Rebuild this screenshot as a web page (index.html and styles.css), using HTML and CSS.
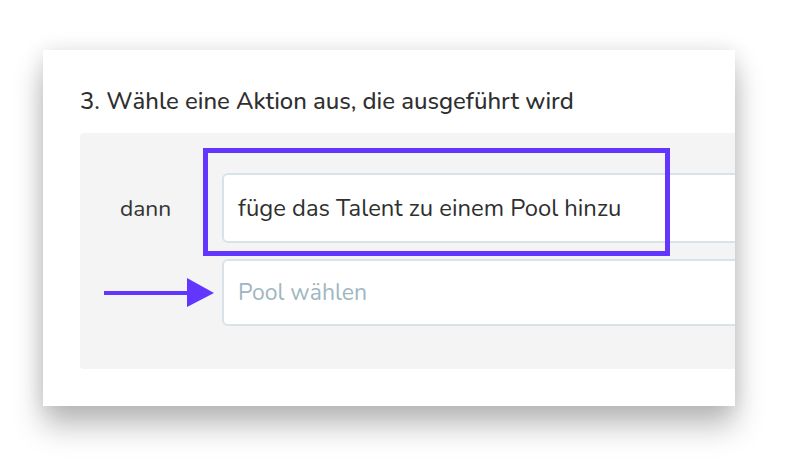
FILE: index.html
```html
<!doctype html>
<html lang="de">
  <head>
    <meta charset="UTF-8" />
    <title>Aktion wählen</title>
    <link rel="stylesheet" href="styles.css">
  </head>
  <body>
    <div class="card">
      <h3 class="step-title">3. Wähle eine Aktion aus, die ausgeführt wird</h3>
      <div class="panel">
        <div class="row">
          <div class="label">dann</div>
          <div class="field">füge das Talent zu einem Pool hinzu</div>
          <div class="highlight"></div>
        </div>
        <div class="row row-second">
          <div class="label label-arrow">
            <svg width="110" height="30" viewBox="0 0 110 30">
              <rect x="0" y="13" width="84" height="4" fill="#6236ff" />
              <polygon points="83,0 110,15 83,29" fill="#6236ff" />
            </svg>
          </div>
          <div class="field field-empty">Pool wählen</div>
        </div>
      </div>
    </div>
  </body>
</html>
```

FILE: styles.css
```css
html,
body {
  margin: 0;
  background: #fff;
  font-family: 'Nunito', 'Open Sans', sans-serif;
  color: #333;
}
body {
  padding: 50px 0 62px 43px;
  min-height: 468px;
  box-sizing: border-box;
}
.card {
  width: 692px;
  height: 356px;
  box-sizing: border-box;
  background: #fff;
  padding: 0 0 0 37px;
  overflow: hidden;
  box-shadow: 0 20px 28px rgba(0, 0, 0, 0.26), 0 0 20px rgba(0, 0, 0, 0.1);
}
.step-title {
  margin: 0 0 17px 0;
  padding-top: 37px;
  font-size: 23.9px;
  font-weight: 500;
  line-height: 29px;
  color: #2f2f2f;
}
.panel {
  background: #f4f4f4;
  border-radius: 4px 0 0 4px;
  padding: 40px 0 43px 0;
  width: 700px;
  display: flex;
  flex-direction: column;
  gap: 16px;
}
.row {
  display: flex;
  align-items: center;
  position: relative;
}
.label {
  width: 142px;
  flex: none;
  box-sizing: border-box;
  padding-left: 40px;
  font-size: 22.8px;
}
.label-arrow {
  padding-left: 24px;
  display: flex;
  align-items: center;
}
.label-arrow svg {
  display: block;
}
.field {
  flex: none;
  width: 540px;
  height: 70px;
  box-sizing: border-box;
  background: #fff;
  border: 2px solid #d9e3e7;
  border-radius: 6px;
  padding-left: 14px;
  display: flex;
  align-items: center;
  font-size: 23.8px;
  color: #2f2f2f;
}
.field-empty {
  height: 67px;
  font-size: 23px;
  color: #9fb6c1;
}
.highlight {
  position: absolute;
  left: 123px;
  top: -25px;
  width: 467px;
  height: 108px;
  box-sizing: border-box;
  border: 5px solid #6236ff;
}
```
